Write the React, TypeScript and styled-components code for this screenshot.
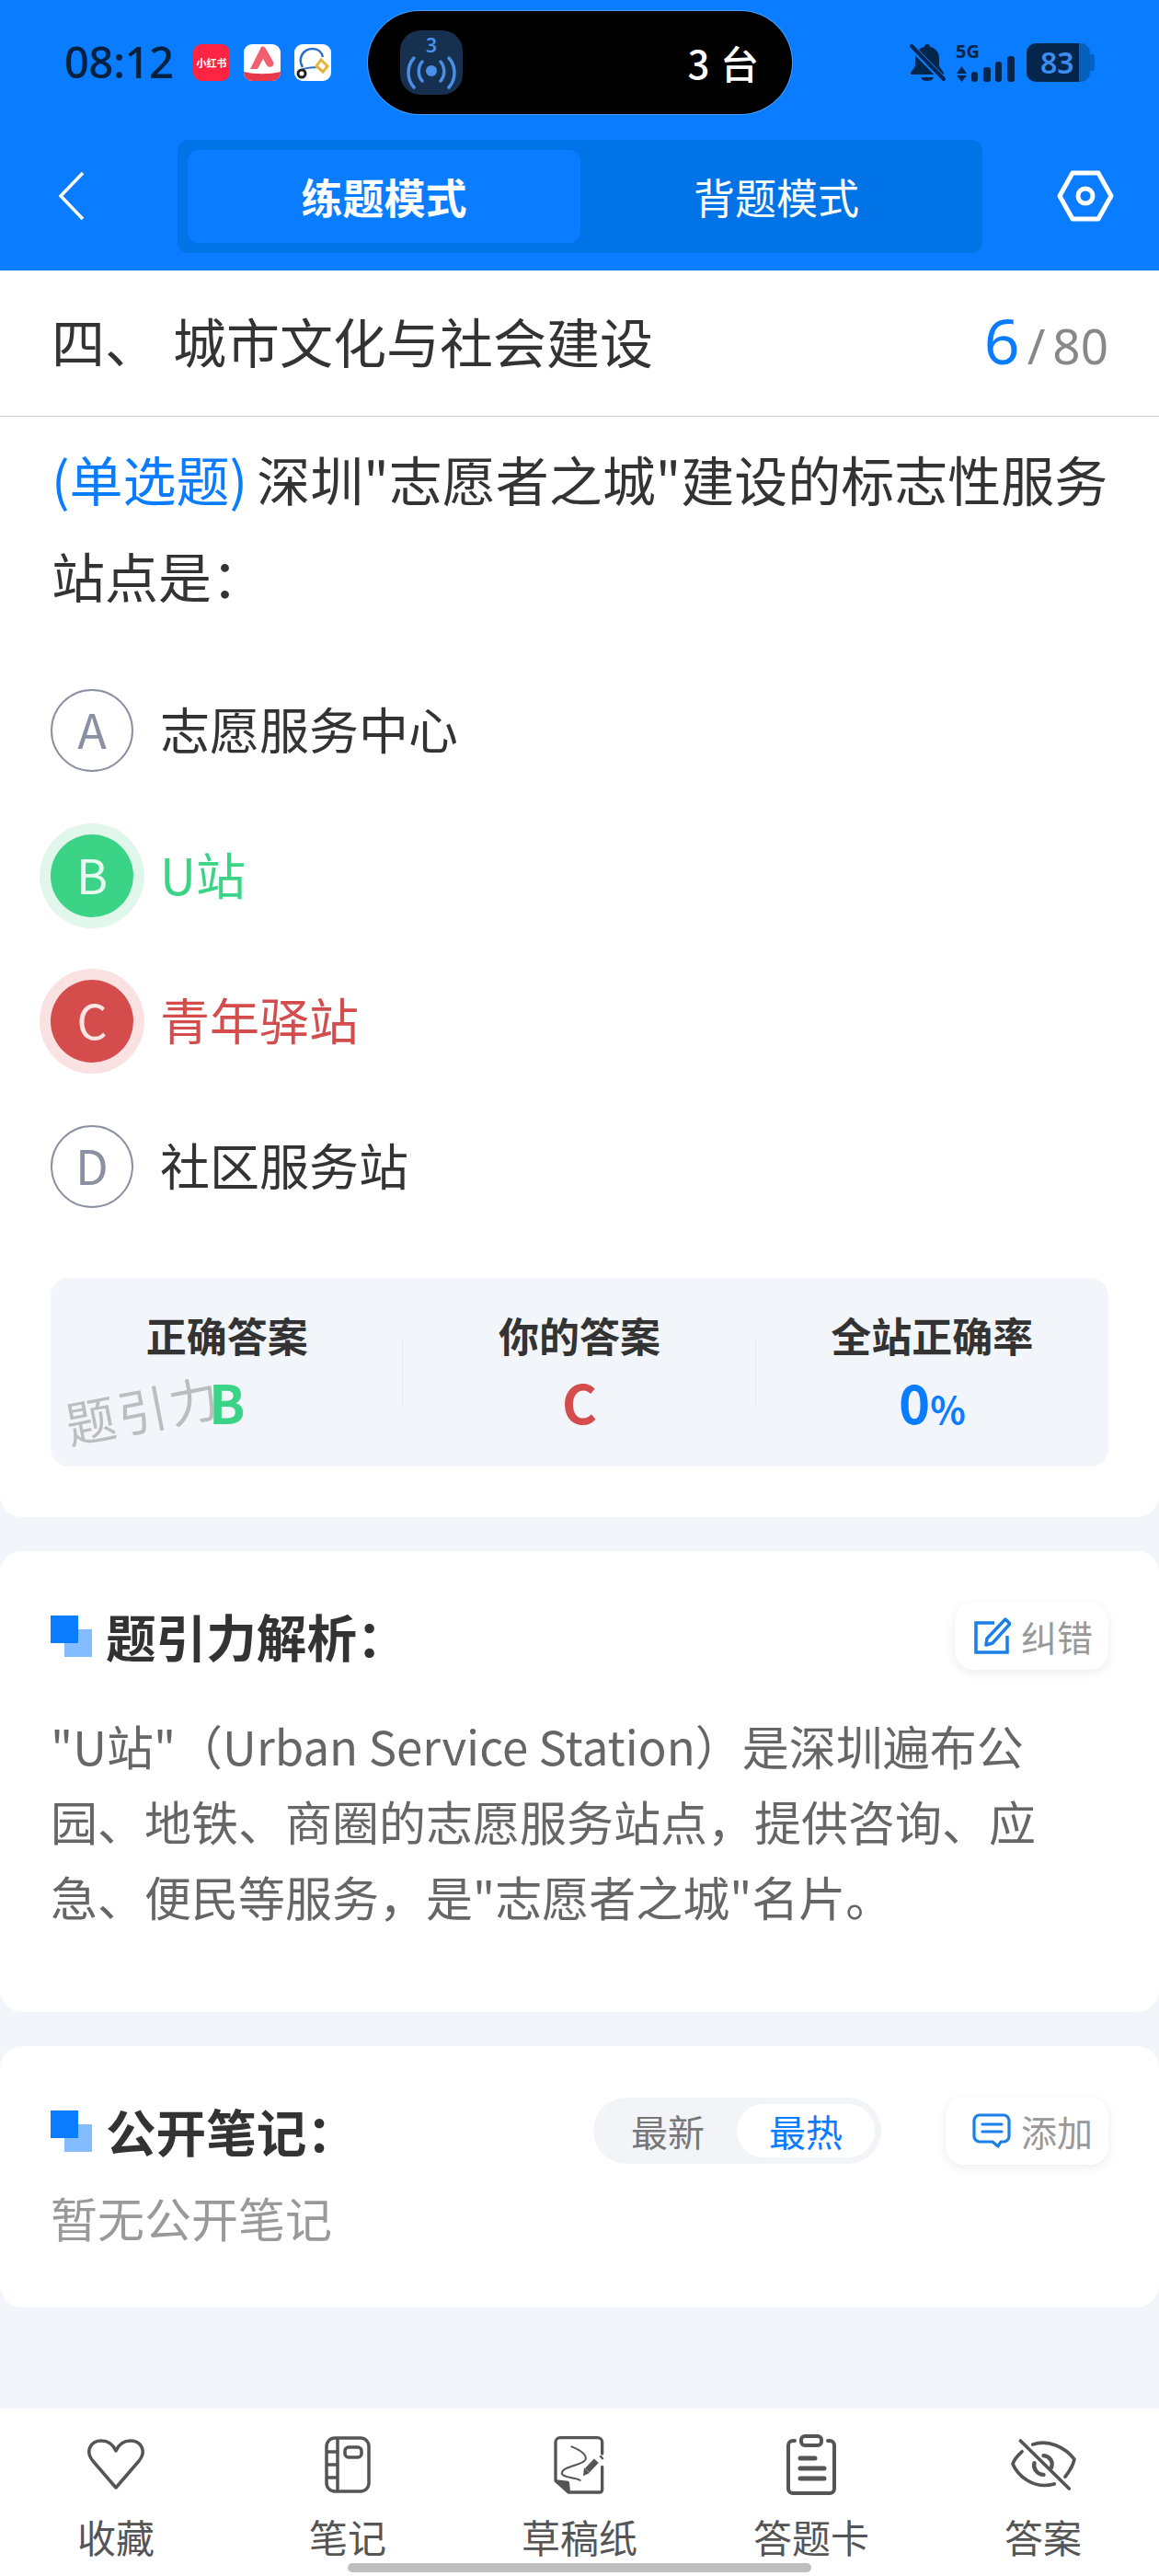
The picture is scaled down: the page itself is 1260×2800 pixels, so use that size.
import React from 'react';
import styled, { createGlobalStyle } from 'styled-components';

const GlobalStyle = createGlobalStyle`
  * { box-sizing: border-box; }
  html, body { margin: 0; padding: 0; background: #f2f5f9; }
  body { font-family: "Noto Sans CJK SC", "Noto Sans", sans-serif; }
`;

const Page = styled.div`
  position: relative;
  width: 1260px;
  height: 2800px;
  display: flex;
  flex-direction: column;
  overflow: hidden;
  background: #f2f5f9;
`;

const Header = styled.header`
  height: 294px;
  flex-shrink: 0;
  background: #0a7cff;
`;

const StatusBar = styled.div`
  height: 152px;
  padding: 12px 0 0 70px;
  display: flex;
  align-items: flex-start;
`;

const Time = styled.div`
  width: 140px;
  margin-top: 30px;
  font-family: "Noto Sans", sans-serif;
  font-size: 47px;
  line-height: 50px;
  font-weight: 500;
  letter-spacing: -0.3px;
  color: #04213f;
`;

const AppIcons = styled.div`
  display: flex;
  gap: 15px;
  margin-top: 36px;
`;

const AppIcon = styled.div<{ $bg: string }>`
  position: relative;
  width: 40px;
  height: 40px;
  border-radius: 9px;
  overflow: hidden;
  background: ${({ $bg }) => $bg};
  display: flex;
  align-items: center;
  justify-content: center;
  color: #fff;
  font-size: 11px;
  line-height: 12px;
  font-weight: 700;
  white-space: nowrap;
`;

const Island = styled.div`
  width: 461px;
  height: 112px;
  margin-left: 40px;
  padding: 0 35px 0 35px;
  flex-shrink: 0;
  border-radius: 56px;
  background: #000;
  box-shadow: 0 0 0 1px rgba(255, 255, 255, 0.25);
  display: flex;
  align-items: center;
  justify-content: space-between;
`;

const IslandIcon = styled.div`
  width: 68px;
  height: 70px;
  padding-top: 4px;
  border-radius: 22px;
  background: #16304f;
  display: flex;
  flex-direction: column;
  align-items: center;
`;

const IslandCount = styled.div`
  font-family: "Noto Sans", sans-serif;
  font-size: 21px;
  line-height: 24px;
  font-weight: 600;
  color: #4a8fe8;
`;

const IslandText = styled.div`
  font-size: 42px;
  line-height: 50px;
  color: #fff;
  font-weight: 500;
  letter-spacing: 1px;
`;

const StatusRight = styled.div`
  margin: 35px 0 0 127px;
  display: flex;
  align-items: flex-start;
  gap: 10px;
`;

const Signal = styled.div`
  position: relative;
  width: 66px;
  height: 42px;
`;

const SignalLabel = styled.div`
  position: absolute;
  left: 1px;
  top: -2px;
  font-family: "Noto Sans", sans-serif;
  font-size: 20px;
  line-height: 22px;
  font-weight: 700;
  color: #04264c;
`;

const Battery = styled.div`
  position: relative;
  width: 75px;
  height: 42px;
  margin-left: 2px;
  display: flex;
`;

const BatteryFill = styled.div`
  width: 57px;
  height: 42px;
  padding-left: 15px;
  border-radius: 10px 0 0 10px;
  background: #04264c;
  color: #3c8cf0;
  font-family: "Noto Sans", sans-serif;
  font-size: 32px;
  line-height: 42px;
  font-weight: 600;
`;

const BatteryRest = styled.div`
  width: 12px;
  height: 42px;
  border-radius: 0 10px 10px 0;
  background: #0560bf;
`;

const BatteryCap = styled.div`
  width: 5px;
  height: 18px;
  margin-top: 12px;
  border-radius: 0 3px 3px 0;
  background: #0560bf;
`;

const NavBar = styled.div`
  height: 142px;
  display: flex;
  align-items: flex-start;
  padding-left: 62px;
`;

const BackButton = styled.div`
  width: 131px;
  height: 122px;
  display: flex;
  align-items: center;
`;

const Segment = styled.div`
  width: 875px;
  height: 123px;
  padding: 11px;
  border-radius: 12px;
  background: #0073e6;
  display: grid;
  grid-template-columns: 427px 1fr;
`;

const SegmentItem = styled.div<{ $active?: boolean }>`
  border-radius: 12px;
  background: ${({ $active }) => ($active ? '#0a7cff' : 'transparent')};
  color: #fff;
  font-size: 45px;
  font-weight: ${({ $active }) => ($active ? 700 : 400)};
  display: flex;
  align-items: center;
  justify-content: center;
`;

const SettingsButton = styled.div`
  margin-left: 81px;
  height: 122px;
  display: flex;
  align-items: center;
`;

const MainCard = styled.section`
  height: 1355px;
  flex-shrink: 0;
  background: #fff;
  border-radius: 0 0 24px 24px;
`;

const TitleRow = styled.div`
  height: 159px;
  padding: 0 55px 7px 56px;
  border-bottom: 1px solid #cfcfcf;
  display: flex;
  align-items: center;
  justify-content: space-between;
`;

const SectionTitle = styled.div`
  font-size: 58px;
  word-spacing: 3px;
  color: #333;
`;

const Progress = styled.div`
  display: flex;
  align-items: baseline;
  color: #888;
  font-family: "Noto Sans", sans-serif;
  font-size: 53px;
`;

const ProgressCurrent = styled.span`
  color: #0a7cff;
  font-size: 68px;
  margin-right: 8px;
`;

const ProgressSlash = styled.span`
  margin-right: 8px;
`;

const Question = styled.div`
  margin: 15px 50px 0 56px;
  font-size: 58px;
  line-height: 105px;
  color: #333;
`;

const QuestionType = styled.span`
  color: #0a7cff;
  margin-right: 10px;
`;

const Options = styled.div`
  margin: 71px 0 0 55px;
  display: flex;
  flex-direction: column;
  gap: 68px;
`;

const Option = styled.div`
  display: flex;
  align-items: center;
  gap: 29px;
  height: 90px;
`;

type Tone = 'plain' | 'right' | 'wrong';

const toneColor: Record<Tone, string> = {
  plain: '#333',
  right: '#3bd386',
  wrong: '#d44c4c',
};

const OptionMark = styled.div<{ $tone: Tone }>`
  width: 90px;
  height: 90px;
  padding-bottom: 5px;
  border-radius: 50%;
  display: flex;
  align-items: center;
  justify-content: center;
  font-size: 52px;
  ${({ $tone }) =>
    $tone === 'plain'
      ? 'border: 2px solid #8c90a3; color: #8c90a3;'
      : `background: ${toneColor[$tone]}; color: #fff;`}
  ${({ $tone }) => $tone === 'right' && 'box-shadow: 0 0 0 12px #e1f7ec; color: #e6faf0;'}
  ${({ $tone }) => $tone === 'wrong' && 'box-shadow: 0 0 0 12px #fae2e2; color: #fbe6e6;'}
`;

const OptionText = styled.div<{ $tone: Tone }>`
  padding-bottom: 5px;
  font-size: 54px;
  color: ${({ $tone }) => toneColor[$tone]};
`;

const Stats = styled.div`
  position: relative;
  margin: 76px 55px 0;
  height: 205px;
  border-radius: 20px;
  background: #f2f5f9;
  display: grid;
  grid-template-columns: repeat(3, 1fr);
`;

const Stat = styled.div<{ $divider?: boolean }>`
  position: relative;
  display: flex;
  flex-direction: column;
  align-items: center;
  padding-top: 32px;
  ${({ $divider }) =>
    $divider &&
    `&::after {
      content: '';
      position: absolute;
      right: 0;
      top: 66px;
      height: 73px;
      width: 1px;
      background: #e6e9ee;
    }`}
`;

const StatLabel = styled.div`
  font-size: 44px;
  line-height: 60px;
  font-weight: 700;
  color: #333;
`;

const StatValue = styled.div<{ $color: string }>`
  margin-top: 4px;
  font-size: 58px;
  line-height: 76px;
  font-weight: 700;
  color: ${({ $color }) => $color};
`;

const Percent = styled.span`
  font-size: 40px;
`;

const Watermark = styled.div`
  position: absolute;
  left: 15px;
  top: 107px;
  font-size: 54px;
  line-height: 70px;
  color: #bcbdbf;
  letter-spacing: 3px;
  transform: rotate(-11deg);
`;

const Card = styled.section<{ $height: number }>`
  height: ${({ $height }) => $height}px;
  margin-top: 37px;
  flex-shrink: 0;
  padding: 55px 55px 0;
  background: #fff;
  border-radius: 24px;
`;

const CardHead = styled.div`
  height: 74px;
  display: flex;
  align-items: center;
`;

const CardMark = styled.div`
  position: relative;
  width: 45px;
  height: 45px;
  margin-right: 15px;
  flex-shrink: 0;
  &::before {
    content: '';
    position: absolute;
    right: 0;
    bottom: 0;
    width: 30px;
    height: 30px;
    background: #85bcff;
  }
  &::after {
    content: '';
    position: absolute;
    left: 0;
    top: 0;
    width: 30px;
    height: 30px;
    background: #0a7cff;
  }
`;

const CardTitle = styled.div`
  font-size: 54.6px;
  line-height: 74px;
  font-weight: 700;
  color: #333;
`;

const HeadSpacer = styled.div`
  flex: 1;
`;

const PillButton = styled.div<{ $width: number }>`
  width: ${({ $width }) => $width}px;
  height: 73px;
  padding-right: 17px;
  border-radius: 20px;
  background: #fff;
  box-shadow: 0 3px 12px rgba(0, 0, 0, 0.08);
  display: flex;
  align-items: center;
  justify-content: flex-end;
  gap: 11px;
  color: #999;
  font-size: 39px;
`;

const Analysis = styled.div`
  margin-top: 41px;
  width: 1100px;
  font-size: 51px;
  line-height: 82px;
  color: #666;
`;

const SortToggle = styled.div`
  width: 313px;
  height: 72px;
  margin-right: 70px;
  padding: 7px 7px 7px 6px;
  border-radius: 36px;
  background: #f2f4f7;
  display: grid;
  grid-template-columns: 1fr 150px;
`;

const SortItem = styled.div<{ $active?: boolean }>`
  border-radius: 29px;
  background: ${({ $active }) => ($active ? '#fff' : 'transparent')};
  color: ${({ $active }) => ($active ? '#0a7cff' : '#777')};
  font-size: 40px;
  display: flex;
  align-items: center;
  justify-content: center;
`;

const EmptyNote = styled.div`
  margin-top: 19px;
  font-size: 51px;
  line-height: 76px;
  color: #999;
`;

const TabBar = styled.nav`
  margin-top: auto;
  height: 182px;
  flex-shrink: 0;
  background: #fff;
  display: grid;
  grid-template-columns: repeat(5, 1fr);
`;

const Tab = styled.div`
  display: flex;
  flex-direction: column;
  align-items: center;
  color: #555;
`;

const TabIcon = styled.div`
  height: 88px;
  margin-top: 17px;
  display: flex;
  align-items: center;
  justify-content: center;
`;

const TabLabel = styled.div`
  font-size: 42px;
  line-height: 56px;
  margin-top: 6px;
`;

const HomeIndicator = styled.div`
  position: absolute;
  left: 378px;
  bottom: 4px;
  width: 504px;
  height: 10px;
  border-radius: 5px;
  background: #bfbfbf;
`;

const Notebook = () => (
  <svg width="50" height="62" viewBox="0 0 50 62" fill="none" stroke="#555" strokeWidth="3.5">
    <rect x="2" y="2" width="46" height="58" rx="9" />
    <path d="M14 2v58M2 17h12M2 31h12M2 45h12" />
    <rect x="22" y="12" width="18" height="11" rx="4" />
  </svg>
);

const Draft = () => (
  <svg width="60" height="66" viewBox="48 32 180 198" fill="none" stroke="#555" strokeWidth="10" strokeLinejoin="round" strokeLinecap="round">
    <path d="M212 95V58a15 15 0 0 0-15-15H75a15 15 0 0 0-15 15v125l42 38h102a8 8 0 0 0 8-8V138" />
    <path d="M62 185l38 4 3 30z" fill="#555" />
    <path d="M112 72c25 10 50 25 46 42-10 20-75 20-78 46 5 15 40 10 60 22" strokeWidth="6" />
    <path d="M193 118l-30 32" strokeWidth="20" strokeLinecap="butt" />
    <path d="M153 141l18 17-21 10z" fill="#555" stroke="none" />
    <path d="M205 102l10 11" strokeWidth="7" strokeLinecap="butt" />
  </svg>
);

const AnswerCard = () => (
  <svg width="54" height="66" viewBox="0 0 54 66" fill="none" stroke="#555" strokeWidth="4" strokeLinecap="round">
    <path d="M9 7H7a5 5 0 0 0-5 5v47a5 5 0 0 0 5 5h40a5 5 0 0 0 5-5V12a5 5 0 0 0-5-5h-2" />
    <rect x="16" y="2" width="22" height="10" rx="4" />
    <path d="M15 26h16M15 37h26M15 48h26" strokeWidth="5" />
  </svg>
);

const EyeOff = () => (
  <svg width="77" height="62" viewBox="20 25 230 185" fill="none" stroke="#555" strokeWidth="11" strokeLinecap="round" strokeLinejoin="round">
    <path d="M100 52c50-17 105 8 135 48-5 25-17 40-30 57" />
    <path d="M65 75c-15 13-25 25-30 40 15 35 65 85 135 65" />
    <path d="M135 88c20 2 33 20 25 40" strokeWidth="13" />
    <path d="M105 112c-5 18 10 38 30 38" strokeWidth="13" />
    <path d="M60 40l158 155" />
  </svg>
);

const options: { mark: string; text: string; tone: Tone }[] = [
  { mark: 'A', text: '志愿服务中心', tone: 'plain' },
  { mark: 'B', text: 'U站', tone: 'right' },
  { mark: 'C', text: '青年驿站', tone: 'wrong' },
  { mark: 'D', text: '社区服务站', tone: 'plain' },
];

const tabs: { label: string; icon: React.ReactNode }[] = [
  {
    label: '收藏',
    icon: (
      <svg width="64" height="56" viewBox="0 0 64 56" fill="none" stroke="#555" strokeWidth="3.5" strokeLinejoin="round">
        <path d="M32 53L7 24C-2 13 5 2 16 2c7 0 13 4 16 11 3-7 9-11 16-11 11 0 18 11 9 22z" />
      </svg>
    ),
  },
  { label: '笔记', icon: <Notebook /> },
  { label: '草稿纸', icon: <Draft /> },
  { label: '答题卡', icon: <AnswerCard /> },
  { label: '答案', icon: <EyeOff /> },
];

export default function App() {
  return (
    <Page>
      <GlobalStyle />
      <Header>
        <StatusBar>
          <Time>08:12</Time>
          <AppIcons>
            <AppIcon $bg="#ff2442">小红书</AppIcon>
            <AppIcon $bg="#fff">
              <svg width="40" height="40" viewBox="0 0 40 40">
                <path d="M7 27L19 3c2-1 4 0 5 2l8 14c2 5-4 8-7 4l-4-7-6 11z" fill="#f0606f" />
                <path d="M0 30c12 3 28 3 40 0v10H0z" fill="#e8394a" />
              </svg>
            </AppIcon>
            <AppIcon $bg="#fff">
              <svg width="40" height="40" viewBox="0 0 40 40" fill="none">
                <path d="M9 25C3 15 10 5 20 5c6 0 10 4 11 9" stroke="#2a6fc9" strokeWidth="2.5" />
                <path d="M9 27c5-1 10-2 16-2" stroke="#2a6fc9" strokeWidth="2" />
                <circle cx="8" cy="32" r="4" stroke="#222" strokeWidth="3" />
                <path d="M29 17l7 7-5 6-7-6z" stroke="#e8b23a" strokeWidth="3" />
              </svg>
            </AppIcon>
          </AppIcons>
          <Island>
            <IslandIcon>
              <IslandCount>3</IslandCount>
              <svg width="56" height="36" viewBox="0 0 56 36" fill="none" stroke="#4a8fe8" strokeWidth="3.5" strokeLinecap="round">
                <circle cx="28" cy="16" r="6" fill="#4a8fe8" stroke="none" />
                <path d="M18 6c-5 6-5 15 0 21M38 6c5 6 5 15 0 21M9 2c-8 9-8 23 0 32M47 2c8 9 8 23 0 32" />
              </svg>
            </IslandIcon>
            <IslandText>3 台</IslandText>
          </Island>
          <StatusRight>
            <svg width="40" height="42" viewBox="0 0 40 42">
              <path d="M20 1c-2 0-3 1-3 3-6 1-10 6-10 12v9l-5 7v2h36v-2l-5-7v-9c0-6-4-11-10-12 0-2-1-3-3-3z" fill="#04264c" />
              <path d="M13 37c1 3 4 4 7 4s6-1 7-4z" fill="#04264c" />
              <path d="M2 3l36 37" stroke="#0a7cff" strokeWidth="7" />
              <path d="M3 3l35 36" stroke="#04264c" strokeWidth="4" strokeLinecap="round" />
            </svg>
            <Signal>
              <SignalLabel>5G</SignalLabel>
              <svg width="66" height="42" viewBox="0 0 66 42" fill="#04264c">
                <path d="M7.5 25l5.5 8H2zM2 35h11l-5.5 7z" />
                <rect x="18" y="31" width="7" height="11" rx="3" />
                <rect x="31" y="26" width="8" height="16" rx="3" />
                <rect x="44" y="20" width="7" height="22" rx="3" />
                <rect x="57" y="14" width="8" height="28" rx="3" />
              </svg>
            </Signal>
            <Battery>
              <BatteryFill>83</BatteryFill>
              <BatteryRest />
              <BatteryCap />
            </Battery>
          </StatusRight>
        </StatusBar>
        <NavBar>
          <BackButton>
            <svg width="32" height="54" viewBox="0 0 32 54" fill="none" stroke="#fff" strokeWidth="3.5">
              <path d="M28 2L4 27l24 25" />
            </svg>
          </BackButton>
          <Segment>
            <SegmentItem $active>练题模式</SegmentItem>
            <SegmentItem>背题模式</SegmentItem>
          </Segment>
          <SettingsButton>
            <svg width="62" height="56" viewBox="0 0 62 56" fill="none" stroke="#fff" strokeWidth="5" strokeLinejoin="round">
              <path d="M17 3h28l14 25-14 25H17L3 28z" />
              <circle cx="31" cy="28" r="8" />
            </svg>
          </SettingsButton>
        </NavBar>
      </Header>

      <MainCard>
        <TitleRow>
          <SectionTitle>四、 城市文化与社会建设</SectionTitle>
          <Progress>
            <ProgressCurrent>6</ProgressCurrent>
            <ProgressSlash>/</ProgressSlash>
            80
          </Progress>
        </TitleRow>
        <Question>
          <QuestionType>(单选题)</QuestionType>深圳"志愿者之城"建设的标志性服务站点是：
        </Question>
        <Options>
          {options.map((o) => (
            <Option key={o.mark}>
              <OptionMark $tone={o.tone}>{o.mark}</OptionMark>
              <OptionText $tone={o.tone}>{o.text}</OptionText>
            </Option>
          ))}
        </Options>
        <Stats>
          <Stat $divider>
            <StatLabel>正确答案</StatLabel>
            <StatValue $color="#3bd386">B</StatValue>
          </Stat>
          <Stat $divider>
            <StatLabel>你的答案</StatLabel>
            <StatValue $color="#d44c4c">C</StatValue>
          </Stat>
          <Stat>
            <StatLabel>全站正确率</StatLabel>
            <StatValue $color="#0a7cff">
              0<Percent>%</Percent>
            </StatValue>
          </Stat>
          <Watermark>题引力</Watermark>
        </Stats>
      </MainCard>

      <Card $height={501}>
        <CardHead>
          <CardMark />
          <CardTitle>题引力解析：</CardTitle>
          <HeadSpacer />
          <PillButton $width={167}>
            <svg width="40" height="40" viewBox="0 0 40 40" fill="none" stroke="#1a7fe6" strokeWidth="3.5">
              <path d="M22 6H2v32h34V20" />
              <path d="M34 2l5 5-19 21-7 2 1-7z" strokeLinejoin="round" />
            </svg>
            纠错
          </PillButton>
        </CardHead>
        <Analysis>
          "U站"（Urban Service Station）是深圳遍布公园、地铁、商圈的志愿服务站点，提供咨询、应急、便民等服务，是"志愿者之城"名片。
        </Analysis>
      </Card>

      <Card $height={284}>
        <CardHead>
          <CardMark />
          <CardTitle>公开笔记：</CardTitle>
          <HeadSpacer />
          <SortToggle>
            <SortItem>最新</SortItem>
            <SortItem $active>最热</SortItem>
          </SortToggle>
          <PillButton $width={177}>
            <svg width="42" height="38" viewBox="0 0 42 38" fill="none" stroke="#1a7fe6" strokeWidth="3.2" strokeLinejoin="round" strokeLinecap="round">
              <path d="M22 31H8a6 6 0 0 1-6-6V8a6 6 0 0 1 6-6h26a6 6 0 0 1 6 6v17a6 6 0 0 1-6 6h-3l-3 5z" />
              <path d="M11 12h21M11 20h21" />
            </svg>
            添加
          </PillButton>
        </CardHead>
        <EmptyNote>暂无公开笔记</EmptyNote>
      </Card>

      <TabBar>
        {tabs.map((t) => (
          <Tab key={t.label}>
            <TabIcon>{t.icon}</TabIcon>
            <TabLabel>{t.label}</TabLabel>
          </Tab>
        ))}
      </TabBar>
      <HomeIndicator />
    </Page>
  );
}
